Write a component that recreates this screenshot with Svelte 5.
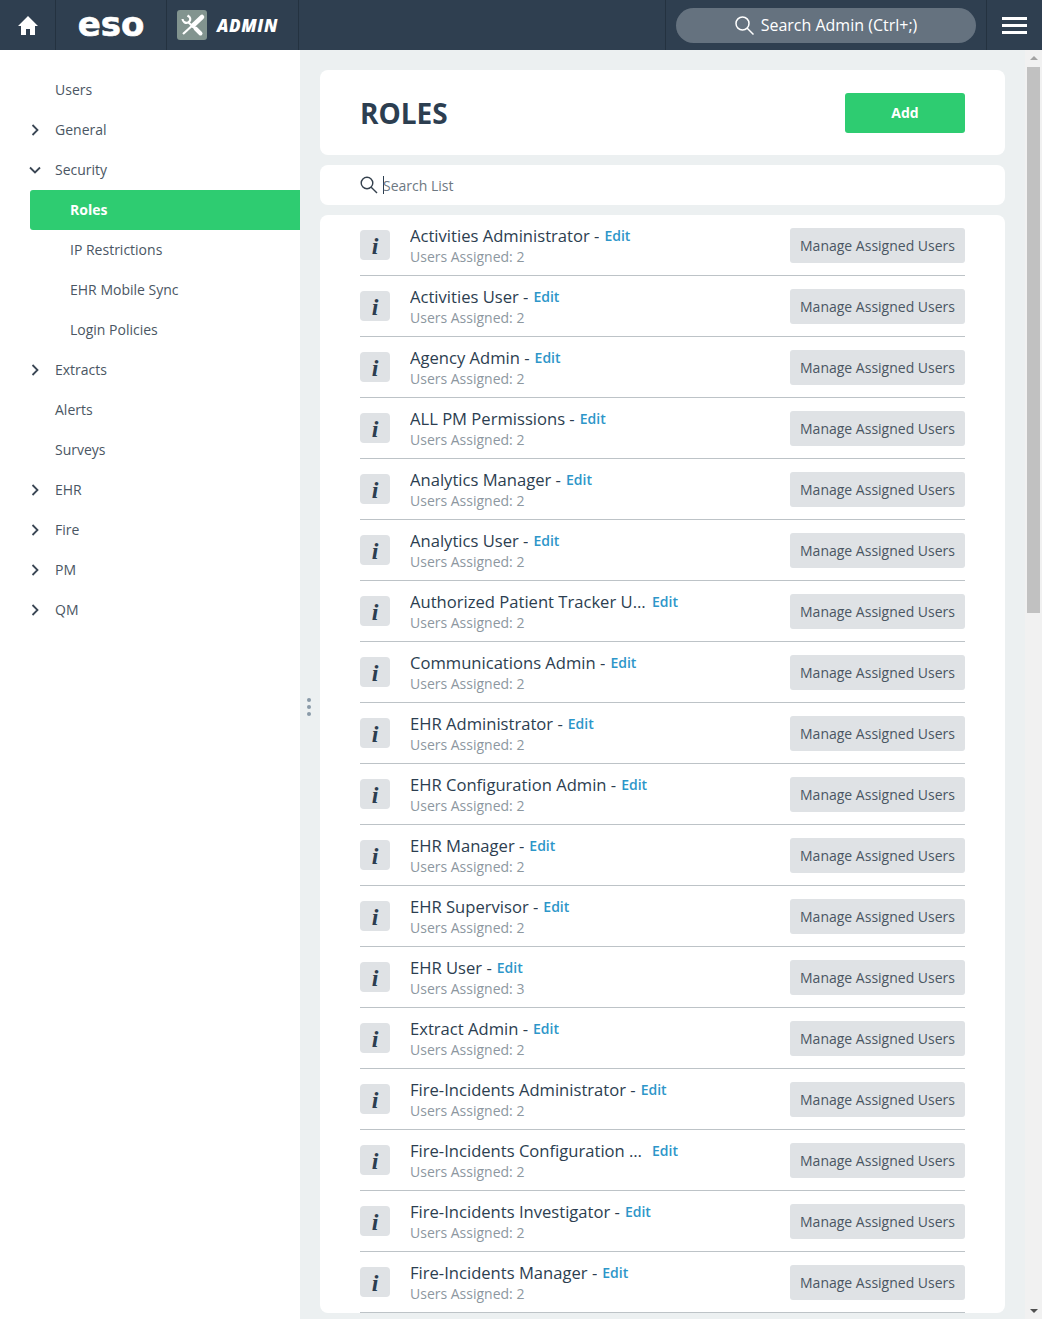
<script>
  const nav = [
    { label: "Users" },
    { label: "General", arrow: "right" },
    { label: "Security", arrow: "open" },
    { label: "Roles", sub: true, active: true },
    { label: "IP Restrictions", sub: true },
    { label: "EHR Mobile Sync", sub: true },
    { label: "Login Policies", sub: true },
    { label: "Extracts", arrow: "right" },
    { label: "Alerts" },
    { label: "Surveys" },
    { label: "EHR", arrow: "right" },
    { label: "Fire", arrow: "right" },
    { label: "PM", arrow: "right" },
    { label: "QM", arrow: "right" },
  ];

  const roles = [
    ["Activities Administrator", 2],
    ["Activities User", 2],
    ["Agency Admin", 2],
    ["ALL PM Permissions", 2],
    ["Analytics Manager", 2],
    ["Analytics User", 2],
    ["Authorized Patient Tracker User", 2],
    ["Communications Admin", 2],
    ["EHR Administrator", 2],
    ["EHR Configuration Admin", 2],
    ["EHR Manager", 2],
    ["EHR Supervisor", 2],
    ["EHR User", 3],
    ["Extract Admin", 2],
    ["Fire-Incidents Administrator", 2],
    ["Fire-Incidents Configuration Admin", 2],
    ["Fire-Incidents Investigator", 2],
    ["Fire-Incidents Manager", 2],
  ];
</script>

<div class="page">
  <header class="topbar">
    <div class="cell home">
      <svg width="20" height="19" viewBox="0 0 20 19">
        <path d="M10 0 20 10H17V19H12V13H8V19H3V10H0z" fill="#fff" />
      </svg>
    </div>
    <div class="cell logo"><span class="eso">eso</span></div>
    <div class="cell admin">
      <span class="tools">
        <svg width="30" height="30" viewBox="0 0 30 30" fill="none" stroke="#fff">
          <path d="M25 7 16 15.500" stroke-width="4.500" stroke-linecap="round" />
          <path d="M17 14 6 24" stroke-width="2.200" />
          <path d="M11 12 23 23" stroke-width="2" />
          <path d="M18.500 18.500 23.500 23.500" stroke-width="4" stroke-linecap="round" />
          <path d="M5.500 9c.3 2.800 3 4.600 5.500 3.600 2.400-1 3-3.900 1.300-5.800L10.500 5.500" stroke-width="2.200" />
        </svg>
      </span>
      <span class="admin-text">ADMIN</span>
    </div>
    <div class="cell spacer"></div>
    <div class="cell search-cell">
      <div class="pill">
        <svg width="19" height="19" viewBox="0 0 19 19" fill="none" stroke="#fff" stroke-width="1.500">
          <circle cx="7.500" cy="7.500" r="6.500" />
          <path d="M12 12 18.500 18.500" />
        </svg>
        <span>Search Admin (Ctrl+;)</span>
      </div>
    </div>
    <div class="burger"><i></i><i></i><i></i></div>
  </header>

  <div class="body">
    <nav class="sidebar">
      {#each nav as item}
        <div class="nav-item" class:sub={item.sub} class:active={item.active}>
          {#if item.arrow === "right"}
            <svg class="arrow" width="10" height="12" viewBox="0 0 10 12" fill="none" stroke="#3a4654" stroke-width="1.800">
              <path d="M2.500 1 7.500 6 2.500 11" />
            </svg>
          {:else if item.arrow === "open"}
            <svg class="arrow open" width="12" height="8" viewBox="0 0 12 8" fill="none" stroke="#3a4654" stroke-width="1.800">
              <path d="M1 1.500 6 6.500 11 1.500" />
            </svg>
          {/if}
          <span>{item.label}</span>
        </div>
      {/each}
    </nav>

    <main class="content">
      <div class="handle"><i></i><i></i><i></i></div>

      <section class="card title-card">
        <h1>ROLES</h1>
        <button class="add">Add</button>
      </section>

      <section class="card search-card">
        <svg width="18" height="18" viewBox="0 0 18 18" fill="none" stroke="#34404d" stroke-width="1.400">
          <circle cx="7" cy="7" r="5.800" />
          <path d="M11.200 11.200 17 17" />
        </svg>
        <span class="caret"></span>
        <span class="placeholder">Search List</span>
      </section>

      <section class="card list">
        {#each roles as [name, count]}
          <div class="row">
            <span class="info">i</span>
            <div class="meta">
              <div class="line">
                <span class="name">{name} -</span>
                <a class="edit" href="#edit">Edit</a>
              </div>
              <div class="count">Users Assigned: {count}</div>
            </div>
            <button class="manage">Manage Assigned Users</button>
          </div>
        {/each}
      </section>
    </main>

    <div class="scrollbar">
      <span class="up"></span>
      <span class="thumb"></span>
      <span class="down"></span>
    </div>
  </div>
</div>

<style>
  :global(body) {
    margin: 0;
    overflow: hidden;
  }

  .page {
    width: 1042px;
    height: 1319px;
    overflow: hidden;
    font-family: "Open Sans", sans-serif;
    font-size: 14px;
    color: #2c3e50;
  }

  .topbar {
    display: flex;
    height: 50px;
    background: #2f3f50;
  }

  .cell {
    display: flex;
    align-items: center;
    box-sizing: border-box;
    border-right: 1px solid #243240;
  }

  .home {
    width: 56px;
    padding-left: 18px;
  }

  .logo {
    width: 111px;
    justify-content: center;
  }

  .eso {
    font-family: "DejaVu Sans", sans-serif;
    font-weight: 700;
    font-size: 34px;
    line-height: 50px;
    color: #fff;
    -webkit-text-stroke: .6px #fff;
    margin-top: -3px;
  }

  .admin {
    width: 132px;
    padding-left: 10px;
    gap: 10px;
  }

  .tools {
    display: block;
    width: 30px;
    height: 30px;
    border-radius: 3px;
    background: #82948f;
  }

  .admin-text {
    font-size: 17px;
    font-weight: 800;
    font-style: italic;
    letter-spacing: .6px;
    color: #fff;
  }

  .spacer {
    width: 367px;
  }

  .search-cell {
    width: 321px;
    padding-left: 10px;
  }

  .pill {
    display: flex;
    align-items: center;
    justify-content: center;
    gap: 7px;
    width: 300px;
    height: 35px;
    margin-top: 1px;
    border-radius: 18px;
    background: #65727f;
    color: #fff;
    font-size: 16px;
  }

  .pill span {
    margin-top: -2px;
  }

  .burger {
    display: flex;
    flex-direction: column;
    gap: 4px;
    padding: 17px 0 0 15px;
  }

  .burger i {
    display: block;
    width: 25px;
    height: 3px;
    background: #fff;
  }

  .body {
    display: flex;
    height: 1269px;
  }

  .sidebar {
    box-sizing: border-box;
    width: 300px;
    flex: none;
    padding: 20px 0 0 30px;
    background: #fff;
  }

  .nav-item {
    position: relative;
    display: flex;
    align-items: center;
    height: 40px;
    padding-left: 25px;
    color: #4a5663;
  }

  .nav-item span {
    margin-top: -2px;
  }

  .nav-item.sub {
    padding-left: 40px;
  }

  .nav-item.active {
    border-radius: 3px 0 0 3px;
    background: #2ecc71;
    color: #fff;
    font-weight: 700;
  }

  .arrow {
    position: absolute;
    left: 0;
    top: 14px;
  }

  .arrow.open {
    top: 16px;
    left: -1px;
  }

  .content {
    position: relative;
    box-sizing: border-box;
    width: 725px;
    flex: none;
    padding: 20px 20px 0;
    background: #ecf0f1;
  }

  .handle {
    position: absolute;
    left: 7px;
    top: 648px;
    display: flex;
    flex-direction: column;
    gap: 3px;
  }

  .handle i {
    display: block;
    width: 4px;
    height: 4px;
    border-radius: 2px;
    background: #8a9aa8;
  }

  .card {
    box-sizing: border-box;
    margin-bottom: 10px;
    border-radius: 8px;
    background: #fff;
  }

  .title-card {
    display: flex;
    align-items: center;
    justify-content: space-between;
    height: 85px;
    padding: 0 40px;
  }

  h1 {
    margin: 1px 0 0;
    font-size: 28px;
    font-weight: 700;
    color: #2c3e50;
  }

  .add {
    width: 120px;
    height: 40px;
    margin-top: 1px;
    padding: 0 0 2px;
    border: 0;
    border-radius: 3px;
    background: #2ecc71;
    color: #fff;
    font: 700 14px "Open Sans", sans-serif;
  }

  .search-card {
    display: flex;
    align-items: center;
    height: 40px;
    padding-left: 40px;
  }

  .caret {
    width: 1px;
    height: 18px;
    margin-left: 5px;
    background: #2c3e50;
  }

  .placeholder {
    margin-left: -1px;
    color: #6d7882;
  }

  .list {
    padding: 0 40px;
  }

  .row {
    display: flex;
    align-items: center;
    box-sizing: border-box;
    height: 61px;
    padding-top: 1px;
    border-bottom: 1px solid #bdc3c7;
  }

  .info {
    width: 30px;
    height: 30px;
    flex: none;
    margin-top: -1px;
    border-radius: 4px;
    background: #dfe2e5;
    color: #2c3e50;
    font: italic 700 24px/32px "Liberation Serif", serif;
    text-align: center;
  }

  .meta {
    flex: 1;
    margin-left: 20px;
  }

  .line {
    display: flex;
    align-items: baseline;
    height: 22px;
    font-size: 16.6px;
    line-height: 22px;
  }

  .name {
    max-width: 237px;
    overflow: hidden;
    white-space: pre;
    text-overflow: ellipsis;
    color: #2c3e50;
  }

  .edit {
    position: relative;
    top: -1px;
    margin-left: 5px;
    font-size: 14px;
    font-weight: 600;
    color: #2d96c9;
    text-decoration: none;
  }

  .count {
    font-size: 14px;
    line-height: 20px;
    color: #8d979f;
  }

  .manage {
    width: 175px;
    height: 35px;
    padding: 0;
    border: 0;
    border-radius: 3px;
    background: #dfe2e5;
    color: #4a5663;
    font: 14px "Open Sans", sans-serif;
  }

  .scrollbar {
    position: relative;
    width: 17px;
    flex: none;
    background: #f1f1f1;
  }

  .thumb {
    position: absolute;
    left: 2px;
    top: 17px;
    width: 13px;
    height: 546px;
    background: #c1c1c1;
  }

  .up,
  .down {
    position: absolute;
    left: 5px;
    width: 0;
    height: 0;
    border-left: 4px solid transparent;
    border-right: 4px solid transparent;
  }

  .up {
    top: 6px;
    border-bottom: 4px solid #a3a3a3;
  }

  .down {
    bottom: 6px;
    border-top: 4px solid #505050;
  }
</style>
